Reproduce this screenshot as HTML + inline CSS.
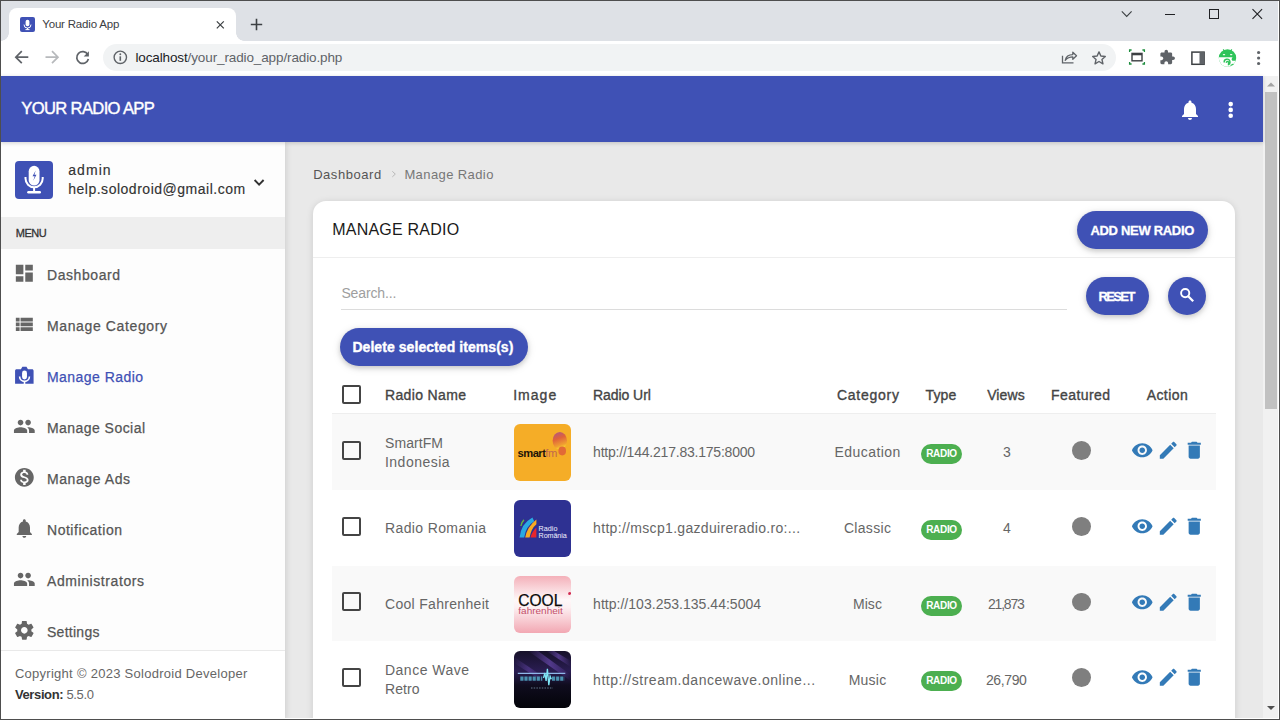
<!DOCTYPE html>
<html><head><meta charset="utf-8"><title>Your Radio App</title>
<style>
*{box-sizing:border-box}
html,body{margin:0;padding:0}
body{width:1280px;height:720px;overflow:hidden;position:relative;background:#e9e9e9;font-family:"Liberation Sans",sans-serif;color:#555}
.a{position:absolute}
.t{position:absolute;white-space:nowrap;line-height:1;z-index:3}
svg{position:absolute;display:block;z-index:3}
#tabstrip{left:0;top:0;width:1280px;height:41px;background:#dee1e6}
#tab{left:9px;top:8px;width:227px;height:33px;background:#fff;border-radius:8px 8px 0 0}
#tabcl{left:1px;top:33px;width:8px;height:8px;background:radial-gradient(circle at 0 0,#dee1e6 7.5px,#fff 8px)}
#tabcr{left:236px;top:33px;width:8px;height:8px;background:radial-gradient(circle at 100% 0,#dee1e6 7.5px,#fff 8px)}
#favicon{left:20px;top:17px;width:15px;height:15px;background:#3f51b5;border-radius:2px}
#toolbar{left:0;top:41px;width:1280px;height:35px;background:#fff}
#omni{left:103px;top:44px;width:1013px;height:27px;background:#f1f3f4;border-radius:14px}
#header{left:0;top:76px;width:1263px;height:66px;background:#3f51b5;z-index:2;box-shadow:0 1px 4px rgba(0,0,0,.18)}
#sidebar{left:0;top:142px;width:285px;height:578px;background:#fdfdfd;box-shadow:1px 0 6px rgba(0,0,0,.12)}
#avatar{left:15px;top:161px;width:38px;height:38px;background:#3f51b5;border-radius:4px}
#menuband{left:0;top:217px;width:285px;height:32px;background:#eeeeee}
#sfooter{left:0;top:650px;width:285px;height:70px;background:#fff;border-top:1px solid #e9e9e9}
#card{left:313px;top:201px;width:922px;height:600px;background:#fff;border-radius:13px;box-shadow:0 1px 7px rgba(0,0,0,.13)}
#cardhdr{left:313px;top:257px;width:922px;height:1px;background:#eeeeee}
#searchline{left:341px;top:309px;width:726px;height:1px;background:#dcdcdc}
.btn{position:absolute;background:#3f51b5;border-radius:19px;box-shadow:0 2px 5px rgba(0,0,0,.16),0 2px 10px rgba(0,0,0,.10)}
#addbtn{left:1077px;top:211px;width:131px;height:38px}
#resetbtn{left:1086px;top:277px;width:63px;height:38px}
#searchbtn{left:1168px;top:277px;width:38px;height:38px}
#delbtn{left:340px;top:328px;width:188px;height:38px}
#thline{left:332px;top:413px;width:884px;height:1px;background:#eeeeee}
.row{position:absolute;left:332px;width:884px;background:#f9f9f9}
.cb{position:absolute;left:342px;width:19px;height:19px;border:2px solid #444;border-radius:2px}
.thumb{position:absolute;left:514px;width:57px;height:57px;border-radius:6px;overflow:hidden}
.badge{position:absolute;left:921px;width:41px;height:20px;border-radius:10px;background:#4caf50;color:#fff;font-weight:700;font-size:10px;line-height:20px;text-align:center;letter-spacing:-0.3px}
.dot{position:absolute;left:1071.8px;width:18.8px;height:18.8px;border-radius:50%;background:#7f7f7f}
#scroll{left:1263px;top:76px;width:16px;height:644px;background:#f1f1f1}
#thumbbar{left:1265px;top:92px;width:12px;height:317px;background:#c1c1c1}
#border{left:0;top:0;width:1280px;height:720px;border:1px solid #4e4e4e;box-shadow:inset -1px -1px 0 #fff;pointer-events:none;z-index:5}

</style></head><body>
<div id="tabstrip" class="a"></div>
<div id="tab" class="a"></div>
<div id="tabcl" class="a"></div>
<div id="tabcr" class="a"></div>
<div id="favicon" class="a"></div>
<svg style="left:20px;top:17px" width="15" height="15" viewBox="0 0 15 15"><rect x="5.6" y="2.8" width="3.8" height="6.4" rx="1.9" fill="#fff"/><path d="M4 7.6a3.5 3.5 0 0 0 7 0" stroke="#fff" stroke-width="1" fill="none"/><path d="M7.5 11v1.5M5.5 12.6h4" stroke="#fff" stroke-width="1"/></svg>
<svg style="left:214px;top:19px" width="12" height="12" viewBox="0 0 12 12"><path d="M2.8 2.4l7 7M9.8 2.4l-7 7" stroke="#3c4043" stroke-width="1.25"/></svg>
<svg style="left:249px;top:17px" width="15" height="15" viewBox="0 0 15 15"><path d="M7.5 1.8v11.4M1.8 7.5h11.4" stroke="#3c4043" stroke-width="1.6"/></svg>
<!-- window controls -->
<svg style="left:1118px;top:6px" width="16" height="16" viewBox="0 0 16 16"><path d="M3.8 5.4l4.9 5 4.9-5" stroke="#3c4043" stroke-width="1.1" fill="none"/></svg>
<div class="a" style="left:1165px;top:13.5px;width:10px;height:1.2px;background:#202124"></div>
<div class="a" style="left:1209px;top:9px;width:9.6px;height:9.6px;border:1.2px solid #202124"></div>
<svg style="left:1250px;top:7px" width="14" height="14" viewBox="0 0 14 14"><path d="M2.5 2.2l9.6 9.7M12.1 2.2l-9.6 9.7" stroke="#202124" stroke-width="1.1"/></svg>
<div id="toolbar" class="a"></div>
<svg style="left:12px;top:45px" width="20" height="24" viewBox="0 0 20 24"><path d="M16.3 12.2H4.5M9.8 6.2l-6 6 6 6" stroke="#5f6368" stroke-width="1.7" fill="none"/></svg>
<svg style="left:42px;top:45px" width="20" height="24" viewBox="0 0 20 24"><path d="M3.5 12.2h11.8M10 6.2l6 6-6 6" stroke="#b7b9bc" stroke-width="1.7" fill="none"/></svg>
<svg style="left:73px;top:45px" width="20" height="24" viewBox="0 0 20 24"><path d="M14.8 9.6A5.9 5.9 0 1 0 15.4 14" stroke="#5f6368" stroke-width="1.7" fill="none"/><path d="M15.9 6.2v5.2h-5.2z" fill="#5f6368"/></svg>
<div id="omni" class="a"></div>
<svg style="left:112px;top:49px" width="17" height="17" viewBox="0 0 17 17"><circle cx="8.3" cy="8.3" r="6.2" stroke="#5f6368" stroke-width="1.4" fill="none"/><path d="M8.3 7.3v4.5" stroke="#5f6368" stroke-width="1.6"/><circle cx="8.3" cy="5.2" r="0.95" fill="#5f6368"/></svg>
<!-- share -->
<svg style="left:1060px;top:48px" width="18" height="18" viewBox="0 0 18 18"><path d="M2.5 7.8v7h11" stroke="#5f6368" stroke-width="1.3" fill="none"/><path d="M5.2 12.3c.8-3.8 3.3-5.7 7.6-5.7V4.2l3.7 3.5-3.7 3.5V8.9c-3.1 0-5.6 1.1-7.6 3.4z" stroke="#5f6368" stroke-width="1.3" fill="none" stroke-linejoin="round"/></svg>
<!-- star -->
<svg style="left:1090px;top:49px" width="18" height="18" viewBox="0 0 18 18"><path d="M9 2.9l1.85 4.1 4.45.45-3.35 3 1 4.35L9 12.5l-3.95 2.3 1-4.35-3.35-3 4.45-.45z" stroke="#5f6368" stroke-width="1.4" fill="none" stroke-linejoin="round"/></svg>
<!-- screen capture -->
<svg style="left:1128px;top:48px" width="18" height="18" viewBox="0 0 18 18"><rect x="4" y="5.4" width="10" height="7.4" stroke="#3c4043" stroke-width="1.4" fill="none"/><path d="M4 6.6h10" stroke="#3c4043" stroke-width="1.4"/><path d="M1.6 4V2h2M14.4 2h2v2M16.4 14v2h-2M3.6 16h-2v-2" stroke="#1e8e3e" stroke-width="1.3" fill="none"/></svg>
<!-- puzzle -->
<svg style="left:1158.5px;top:49px" width="16.6" height="16.6" viewBox="0 0 24 24"><path d="M20.5 11H19V7c0-1.1-.9-2-2-2h-4V3.5C13 2.12 11.88 1 10.5 1S8 2.12 8 3.5V5H4c-1.1 0-1.99.9-1.99 2v3.8H3.5c1.49 0 2.7 1.210 2.7 2.7s-1.21 2.7-2.7 2.7H2V20c0 1.1.9 2 2 2h3.8v-1.5c0-1.49 1.21-2.7 2.7-2.7 1.49 0 2.7 1.21 2.7 2.7V22H17c1.1 0 2-.9 2-2v-4h1.5c1.38 0 2.5-1.12 2.5-2.5S21.88 11 20.5 11z" fill="#5f6368"/></svg>
<!-- sidebar -->
<svg style="left:1189px;top:48.5px" width="18" height="18" viewBox="0 0 18 18"><rect x="2.9" y="3.1" width="12.2" height="12.2" stroke="#3c4043" stroke-width="1.5" fill="none"/><rect x="10.5" y="3.1" width="4.6" height="12.2" fill="#5f6368"/></svg>
<!-- android avatar -->
<svg style="left:1217px;top:47px" width="21" height="21" viewBox="0 0 21 21"><defs><clipPath id="hc"><circle cx="10.5" cy="11" r="8.7"/></clipPath></defs><circle cx="10.5" cy="11" r="8.7" fill="#2fc45a"/><path d="M6.2 2.4l1.3 2.2M14.8 2.4l-1.3 2.2" stroke="#2fc45a" stroke-width="1.1"/><rect x="5.8" y="6.9" width="2.4" height="1.3" rx=".6" fill="#e8fbe8"/><rect x="13" y="6.9" width="2.4" height="1.3" rx=".6" fill="#e8fbe8"/><g clip-path="url(#hc)"><path d="M1 10.3h14.5l-1 2 .8 1.5H20V21H1z" fill="#fff"/></g><path d="M7.2 15.5a2.9 2.9 0 1 1 3.6 2.4M9.4 15.8a1.2 1.2 0 1 1 1.5 1" stroke="#2fc45a" stroke-width="1.4" fill="none"/><path d="M13.5 18.5l3-1.5" stroke="#2fc45a" stroke-width="1.2"/></svg>
<svg style="left:1250px;top:48px" width="18" height="20" viewBox="0 0 18 20"><circle cx="8.6" cy="4.5" r="1.6" fill="#5f6368"/><circle cx="8.6" cy="10" r="1.6" fill="#5f6368"/><circle cx="8.6" cy="15.5" r="1.6" fill="#5f6368"/></svg>

<div id="header" class="a"></div>
<svg style="left:1177.9px;top:97.5px" width="24" height="24" viewBox="0 0 24 24"><path d="M12 22c1.1 0 2-.9 2-2h-4c0 1.1.89 2 2 2zm6-6v-5c0-3.07-1.64-5.64-4.5-6.32V4c0-.83-.67-1.5-1.5-1.5s-1.5.67-1.5 1.5v.68C7.63 5.36 6 7.92 6 11v5l-2 2v1h16v-1l-2-2z" fill="#fff"/></svg>
<svg style="left:1224px;top:98px" width="14" height="24" viewBox="0 0 14 24"><circle cx="6.7" cy="6.1" r="2.3" fill="#fff"/><circle cx="6.7" cy="11.9" r="2.3" fill="#fff"/><circle cx="6.7" cy="17.7" r="2.3" fill="#fff"/></svg>

<div id="sidebar" class="a"></div>
<div id="avatar" class="a"></div>
<svg style="left:15px;top:161px" width="38" height="38" viewBox="0 0 38 38"><rect x="13.7" y="4.8" width="10.8" height="19.8" rx="5.4" fill="#fff"/><path d="M20.7 9.6L17.5 15.3h2.2l-1.5 4.5 3.3-6h-2.1z" fill="#3f51b5"/><path d="M10.5 16V17.6A8.6 8.6 0 0 0 27.7 17.6V16" stroke="#fff" stroke-width="2" fill="none"/><path d="M19.1 26v4.4" stroke="#fff" stroke-width="2"/><rect x="12.2" y="30" width="13.8" height="2.5" rx="1.2" fill="#fff"/></svg>
<svg style="left:250px;top:174px" width="18" height="18" viewBox="0 0 18 18"><path d="M4.6 6l4.5 4.6L13.6 6" stroke="#333" stroke-width="1.9" fill="none"/></svg>
<div id="menuband" class="a"></div>
<!-- nav icons -->
<svg style="left:13.17px;top:262.2px" width="22.66" height="22.66" viewBox="0 0 24 24"><path d="M3 13h8V3H3v10zm0 8h8v-6H3v6zm10 0h8V11h-8v10zm0-18v6h8V3h-8z" fill="#666"/></svg>
<svg style="left:13.17px;top:313.2px" width="22.66" height="22.66" viewBox="0 0 24 24"><path d="M3 14h4v-4H3v4zm0 5h4v-4H3v4zM3 9h4V5H3v4zm5 5h13v-4H8v4zm0 5h13v-4H8v4zM8 5v4h13V5H8z" fill="#666"/></svg>
<svg style="left:13.17px;top:364.2px" width="22.66" height="22.66" viewBox="0 0 24 24"><path d="M3.8 5.6h4.6L9.6 3.4c.2-.3.4-.4.8-.4h3.4c.4 0 .6.1.8.4l1.2 2.2h4.4c.9 0 1.6.7 1.6 1.6V21H2.2V7.2c0-.9.7-1.6 1.6-1.6z" fill="#3f51b5"/><rect x="9.6" y="7" width="5.2" height="9.3" rx="2.6" fill="#fff"/><path d="M7 13.2a5.2 5.2 0 0 0 10.4 0" stroke="#fff" stroke-width="1.7" fill="none"/><path d="M12.2 18.3V21.5" stroke="#fff" stroke-width="1.7"/></svg>
<svg style="left:13.17px;top:415.2px" width="22.66" height="22.66" viewBox="0 0 24 24"><path d="M16 11c1.66 0 2.99-1.34 2.99-3S17.66 5 16 5c-1.66 0-3 1.34-3 3s1.34 3 3 3zm-8 0c1.66 0 2.99-1.34 2.99-3S9.66 5 8 5C6.34 5 5 6.34 5 8s1.34 3 3 3zm0 2c-2.33 0-7 1.17-7 3.5V19h14v-2.5c0-2.33-4.67-3.5-7-3.5zm8 0c-.29 0-.62.02-.97.05 1.16.84 1.970 1.97 1.97 3.45V19h6v-2.5c0-2.33-4.67-3.5-7-3.5z" fill="#666"/></svg>
<svg style="left:13.17px;top:466.2px" width="22.66" height="22.66" viewBox="0 0 24 24"><path d="M12 2C6.48 2 2 6.48 2 12s4.48 10 10 10 10-4.48 10-10S17.52 2 12 2zm1.41 16.090V20h-2.67v-1.93c-1.71-.36-3.16-1.46-3.27-3.4h1.96c.1 1.05.82 1.87 2.65 1.87 1.96 0 2.4-.98 2.4-1.59 0-.83-.44-1.61-2.67-2.14-2.48-.6-4.18-1.62-4.18-3.67 0-1.72 1.39-2.84 3.11-3.21V4h2.670v1.95c1.86.45 2.79 1.86 2.85 3.39H14.3c-.05-1.11-.64-1.87-2.22-1.87-1.5 0-2.4.68-2.4 1.64 0 .84.65 1.39 2.67 1.910s4.18 1.39 4.18 3.91c-.01 1.83-1.38 2.83-3.12 3.16z" fill="#666"/></svg>
<svg style="left:13.17px;top:517.2px" width="22.66" height="22.66" viewBox="0 0 24 24"><path d="M12 22c1.1 0 2-.9 2-2h-4c0 1.1.89 2 2 2zm6-6v-5c0-3.07-1.64-5.64-4.5-6.32V4c0-.83-.67-1.5-1.5-1.5s-1.5.67-1.5 1.5v.68C7.63 5.36 6 7.92 6 11v5l-2 2v1h16v-1l-2-2z" fill="#666"/></svg>
<svg style="left:13.17px;top:568.2px" width="22.66" height="22.66" viewBox="0 0 24 24"><path d="M16 11c1.66 0 2.99-1.34 2.99-3S17.66 5 16 5c-1.66 0-3 1.34-3 3s1.34 3 3 3zm-8 0c1.66 0 2.99-1.34 2.99-3S9.66 5 8 5C6.34 5 5 6.34 5 8s1.34 3 3 3zm0 2c-2.33 0-7 1.17-7 3.5V19h14v-2.5c0-2.33-4.67-3.5-7-3.5zm8 0c-.29 0-.62.02-.97.05 1.16.84 1.970 1.97 1.97 3.45V19h6v-2.5c0-2.33-4.67-3.5-7-3.5z" fill="#666"/></svg>
<svg style="left:13.17px;top:619.2px" width="22.66" height="22.66" viewBox="0 0 24 24"><path d="M19.43 12.98c.04-.32.07-.64.07-.98s-.03-.66-.07-.98l2.11-1.65c.19-.15.24-.42.12-.64l-2-3.46c-.12-.22-.39-.3-.61-.22l-2.49 1c-.52-.4-1.08-.73-1.69-.98l-.38-2.65C14.46 2.18 14.25 2 14 2h-4c-.25 0-.46.18-.49.42l-.38 2.65c-.61.25-1.17.59-1.690.98l-2.49-1c-.23-.09-.49 0-.61.22l-2 3.46c-.13.22-.07.49.12.64l2.11 1.65c-.04.32-.07.65-.07.98s.03.66.07.98l-2.11 1.65c-.19.15-.24.42-.12.64l2 3.46c.12.22.39.3.61.22l2.49-1c.52.4 1.08.73 1.69.98l.38 2.65c.03.24.24.42.49.42h4c.25 0 .46-.18.49-.42l.38-2.65c.61-.25 1.17-.59 1.69-.98l2.49 1c.23.09.49 0 .61-.22l2-3.46c.12-.22.07-.49-.12-.64l-2.11-1.65zM12 15.5c-1.93 0-3.5-1.57-3.5-3.5s1.57-3.5 3.5-3.5 3.5 1.57 3.5 3.5-1.57 3.5-3.5 3.5z" fill="#666"/></svg>
<div id="sfooter" class="a"></div>

<!-- breadcrumb chevron -->
<svg style="left:389px;top:169px" width="10" height="10" viewBox="0 0 10 10"><path d="M3.3 2.3l3 2.8-3 2.8" stroke="#b5b5b5" stroke-width="0.95" fill="none"/></svg>

<div id="card" class="a"></div>
<div id="cardhdr" class="a"></div>
<div id="addbtn" class="btn"></div>
<div id="searchline" class="a"></div>
<div id="resetbtn" class="btn"></div>
<div id="searchbtn" class="btn"></div>
<svg style="left:1172px;top:282px" width="30" height="28" viewBox="0 0 30 28"><circle cx="13.2" cy="11.1" r="4.1" stroke="#fff" stroke-width="1.9" fill="none"/><path d="M16.2 14.2l5 5" stroke="#fff" stroke-width="2.3"/></svg>
<div id="delbtn" class="btn"></div>
<div class="cb" style="top:385px"></div>
<div id="thline" class="a"></div>
<div class="row" style="top:414px;height:75.75px"></div>
<div class="cb" style="top:440.80px"></div>
<div class="thumb" style="top:424.00px"><svg width="57" height="57" viewBox="0 0 57 57" style="position:static"><defs><linearGradient id="bl" x1="0" y1="0" x2="0.3" y2="1"><stop offset="0" stop-color="#a9558f"/><stop offset=".45" stop-color="#e0623a"/><stop offset=".85" stop-color="#f0a030"/><stop offset="1" stop-color="#f7d030"/></linearGradient></defs><rect width="57" height="57" fill="#f5ad27"/><ellipse cx="45.8" cy="16.8" rx="7.2" ry="8.8" fill="url(#bl)"/><ellipse cx="48.2" cy="27" rx="3.8" ry="4.4" fill="#e26a36"/><text x="3.6" y="32.6" font-family="Liberation Sans" font-weight="700" font-size="11.2" fill="#1e1408" letter-spacing="-0.55">smart<tspan fill="#c0684e" font-weight="400">fm</tspan></text></svg></div>
<div class="badge" style="top:444.00px">RADIO</div>
<div class="dot" style="top:441.00px"></div>
<svg style="left:1130.8px;top:439.00px" width="22.5" height="22.5" viewBox="0 0 24 24"><path d="M12 4.5C7 4.5 2.73 7.61 1 12c1.73 4.39 6 7.5 11 7.5s9.27-3.11 11-7.5c-1.73-4.39-6-7.5-11-7.5zM12 17c-2.76 0-5-2.24-5-5s2.24-5 5-5 5 2.24 5 5-2.240 5-5 5zm0-8c-1.66 0-3 1.34-3 3s1.34 3 3 3 3-1.34 3-3-1.34-3-3-3z" fill="#337ab7"/></svg>
<svg style="left:1156.6px;top:439.00px" width="22.5" height="22.5" viewBox="0 0 24 24"><path d="M3 17.25V21h3.75L17.81 9.94l-3.75-3.75L3 17.25zM20.71 7.04c.39-.39.39-1.02 0-1.41l-2.34-2.34c-.39-.39-1.02-.39-1.41 0l-1.83 1.83 3.75 3.75 1.83-1.83z" fill="#337ab7"/></svg>
<svg style="left:1182.7px;top:439.00px" width="22.5" height="22.5" viewBox="0 0 24 24"><path d="M6 19c0 1.1.9 2 2 2h8c1.1 0 2-.9 2-2V7H6v12zM19 4h-3.5l-1-1h-5l-1 1H5v2h14V4z" fill="#337ab7"/></svg>
<div class="cb" style="top:516.55px"></div>
<div class="thumb" style="top:499.75px"><svg width="57" height="57" viewBox="0 0 57 57" style="position:static"><rect width="57" height="57" fill="#2e3192"/><path d="M5.6 37.6 Q6.8 24 18.4 17.6 L20.2 21.2 Q11.6 26.4 10.2 37.6z" fill="#2aa9e2"/><path d="M11.2 37.6 Q13 26.8 22.4 19.4 L22.4 24.2 Q17 28.6 15.6 37.6z" fill="#f8ab22"/><path d="M16.4 37.6 Q18 31.5 22.4 27.4 L22.4 37.6z" fill="#e8262d"/><path d="M6.2 26 Q6.8 21.6 9.6 19.2 L10.4 20.6 Q8.2 23 7.6 26z" fill="#62b446"/><text x="24.6" y="31.4" font-family="Liberation Sans" font-size="7.2" fill="#f0f0ff">Radio</text><text x="24.6" y="37.6" font-family="Liberation Sans" font-size="7.2" fill="#f0f0ff" letter-spacing="-0.1">România</text></svg></div>
<div class="badge" style="top:519.75px">RADIO</div>
<div class="dot" style="top:516.75px"></div>
<svg style="left:1130.8px;top:514.75px" width="22.5" height="22.5" viewBox="0 0 24 24"><path d="M12 4.5C7 4.5 2.73 7.61 1 12c1.73 4.39 6 7.5 11 7.5s9.27-3.11 11-7.5c-1.73-4.39-6-7.5-11-7.5zM12 17c-2.76 0-5-2.24-5-5s2.24-5 5-5 5 2.24 5 5-2.240 5-5 5zm0-8c-1.66 0-3 1.34-3 3s1.34 3 3 3 3-1.34 3-3-1.34-3-3-3z" fill="#337ab7"/></svg>
<svg style="left:1156.6px;top:514.75px" width="22.5" height="22.5" viewBox="0 0 24 24"><path d="M3 17.25V21h3.75L17.81 9.94l-3.75-3.75L3 17.25zM20.71 7.04c.39-.39.39-1.02 0-1.41l-2.34-2.34c-.39-.39-1.02-.39-1.41 0l-1.83 1.83 3.75 3.75 1.83-1.83z" fill="#337ab7"/></svg>
<svg style="left:1182.7px;top:514.75px" width="22.5" height="22.5" viewBox="0 0 24 24"><path d="M6 19c0 1.1.9 2 2 2h8c1.1 0 2-.9 2-2V7H6v12zM19 4h-3.5l-1-1h-5l-1 1H5v2h14V4z" fill="#337ab7"/></svg>
<div class="row" style="top:565.5px;height:75.75px"></div>
<div class="cb" style="top:592.30px"></div>
<div class="thumb" style="top:575.50px"><svg width="57" height="57" viewBox="0 0 57 57" style="position:static"><defs><linearGradient id="pk" x1="0" y1="0" x2="0" y2="1"><stop offset="0" stop-color="#f4b0b9"/><stop offset=".42" stop-color="#fef8f9"/><stop offset=".55" stop-color="#fdf0f2"/><stop offset="1" stop-color="#f2a7b2"/></linearGradient></defs><rect width="57" height="57" fill="url(#pk)"/><text x="4.2" y="30.4" font-family="Liberation Sans" font-size="15.6" fill="#0a0a0a" stroke="#0a0a0a" stroke-width="0.25" textLength="44.2" lengthAdjust="spacingAndGlyphs">COOL</text><text x="4.3" y="38.3" font-family="Liberation Sans" font-size="8.6" fill="#c4506a" textLength="44.5" lengthAdjust="spacingAndGlyphs">fahrenheit</text><circle cx="55.6" cy="17.4" r="1.5" fill="#d02a50"/></svg></div>
<div class="badge" style="top:595.50px">RADIO</div>
<div class="dot" style="top:592.50px"></div>
<svg style="left:1130.8px;top:590.50px" width="22.5" height="22.5" viewBox="0 0 24 24"><path d="M12 4.5C7 4.5 2.73 7.61 1 12c1.73 4.39 6 7.5 11 7.5s9.27-3.11 11-7.5c-1.73-4.39-6-7.5-11-7.5zM12 17c-2.76 0-5-2.24-5-5s2.24-5 5-5 5 2.24 5 5-2.240 5-5 5zm0-8c-1.66 0-3 1.34-3 3s1.34 3 3 3 3-1.34 3-3-1.34-3-3-3z" fill="#337ab7"/></svg>
<svg style="left:1156.6px;top:590.50px" width="22.5" height="22.5" viewBox="0 0 24 24"><path d="M3 17.25V21h3.75L17.81 9.94l-3.75-3.75L3 17.25zM20.71 7.04c.39-.39.39-1.02 0-1.41l-2.34-2.34c-.39-.39-1.02-.39-1.41 0l-1.83 1.83 3.75 3.75 1.83-1.83z" fill="#337ab7"/></svg>
<svg style="left:1182.7px;top:590.50px" width="22.5" height="22.5" viewBox="0 0 24 24"><path d="M6 19c0 1.1.9 2 2 2h8c1.1 0 2-.9 2-2V7H6v12zM19 4h-3.5l-1-1h-5l-1 1H5v2h14V4z" fill="#337ab7"/></svg>
<div class="cb" style="top:668.05px"></div>
<div class="thumb" style="top:651.25px"><svg width="57" height="57" viewBox="0 0 57 57" style="position:static"><defs><linearGradient id="dw" x1="0" y1="0" x2="0" y2="1"><stop offset="0" stop-color="#161129"/><stop offset=".35" stop-color="#2a1d52"/><stop offset=".6" stop-color="#0f0c1e"/><stop offset="1" stop-color="#040409"/></linearGradient><linearGradient id="st" x1="0" y1="0" x2="1" y2="0"><stop offset="0" stop-color="#7a55c8" stop-opacity="0"/><stop offset=".5" stop-color="#7a55c8" stop-opacity=".55"/><stop offset="1" stop-color="#7a55c8" stop-opacity="0"/></linearGradient></defs><rect width="57" height="57" fill="url(#dw)"/><path d="M14 0 L57 30 L57 24 L24 0z" fill="url(#st)"/><path d="M32 0 L57 16 L57 10 L40 0z" fill="url(#st)"/><path d="M0 6 L30 26 L22 26 L0 12z" fill="url(#st)" opacity=".7"/><path d="M3.8 22.4h47.5" stroke="#8fb8ea" stroke-width="1.1"/><path d="M6.3 27.6h22 M38 27.6h12.5" stroke="#5fc8e6" stroke-width="4.4" stroke-dasharray="3.2 0.9" opacity=".7"/><path d="M29.5 27l1.4-5 1.2 8 1.3-12.3 1.4 16.5 1.3-9 1.2 3" stroke="#7fe6f7" stroke-width="1.3" fill="none"/><path d="M17 37h22" stroke="#9fc0d8" stroke-width="0.6" stroke-dasharray="1.5 1.2"/></svg></div>
<div class="badge" style="top:671.25px">RADIO</div>
<div class="dot" style="top:668.25px"></div>
<svg style="left:1130.8px;top:666.25px" width="22.5" height="22.5" viewBox="0 0 24 24"><path d="M12 4.5C7 4.5 2.73 7.61 1 12c1.73 4.39 6 7.5 11 7.5s9.27-3.11 11-7.5c-1.73-4.39-6-7.5-11-7.5zM12 17c-2.76 0-5-2.24-5-5s2.24-5 5-5 5 2.24 5 5-2.240 5-5 5zm0-8c-1.66 0-3 1.34-3 3s1.34 3 3 3 3-1.34 3-3-1.34-3-3-3z" fill="#337ab7"/></svg>
<svg style="left:1156.6px;top:666.25px" width="22.5" height="22.5" viewBox="0 0 24 24"><path d="M3 17.25V21h3.75L17.81 9.94l-3.75-3.75L3 17.25zM20.71 7.04c.39-.39.39-1.02 0-1.41l-2.34-2.34c-.39-.39-1.02-.39-1.41 0l-1.83 1.83 3.75 3.75 1.83-1.83z" fill="#337ab7"/></svg>
<svg style="left:1182.7px;top:666.25px" width="22.5" height="22.5" viewBox="0 0 24 24"><path d="M6 19c0 1.1.9 2 2 2h8c1.1 0 2-.9 2-2V7H6v12zM19 4h-3.5l-1-1h-5l-1 1H5v2h14V4z" fill="#337ab7"/></svg>
<div id="scroll" class="a"></div>
<div id="thumbbar" class="a"></div>
<svg style="left:1263px;top:76px" width="16" height="16" viewBox="0 0 16 16"><path d="M4 10.5h8L8 6.5z" fill="#a3a3a3"/></svg>
<svg style="left:1263px;top:700px" width="16" height="16" viewBox="0 0 16 16"><path d="M4 6h8l-4 4z" fill="#505050"/></svg>

<div class="t" style="left:42.30px;top:19.37px;font-size:11.5px;font-weight:400;color:#3c4043;letter-spacing:-0.194px;">Your Radio App</div>
<div class="t" style="left:135.40px;top:51.27px;font-size:13.5px;font-weight:400;color:#5f6368;letter-spacing:-0.119px;"><span style="color:#202124">localhost</span>/your_radio_app/radio.php</div>
<div class="t" style="left:21.30px;top:100.55px;font-size:16.6px;font-weight:400;color:#fff;letter-spacing:-0.655px;-webkit-text-stroke:0.4px #fff">YOUR RADIO APP</div>
<div class="t" style="left:68.15px;top:162.95px;font-size:14px;font-weight:400;color:#333;letter-spacing:1.090px;-webkit-text-stroke:0.15px">admin</div>
<div class="t" style="left:68.20px;top:181.90px;font-size:14px;font-weight:400;color:#333;letter-spacing:0.514px;-webkit-text-stroke:0.15px">help.solodroid@gmail.com</div>
<div class="t" style="left:15.80px;top:228.49px;font-size:11px;font-weight:400;color:#333;letter-spacing:-0.530px;-webkit-text-stroke:0.3px">MENU</div>
<div class="t" style="left:47.00px;top:267.55px;font-size:14px;font-weight:400;color:#555;letter-spacing:0.562px;-webkit-text-stroke:0.25px">Dashboard</div>
<div class="t" style="left:47.00px;top:318.55px;font-size:14px;font-weight:400;color:#555;letter-spacing:0.622px;-webkit-text-stroke:0.25px">Manage Category</div>
<div class="t" style="left:47.00px;top:369.55px;font-size:14px;font-weight:400;color:#3f51b5;letter-spacing:0.449px;-webkit-text-stroke:0.25px">Manage Radio</div>
<div class="t" style="left:47.00px;top:420.55px;font-size:14px;font-weight:400;color:#555;letter-spacing:0.448px;-webkit-text-stroke:0.25px">Manage Social</div>
<div class="t" style="left:47.00px;top:471.55px;font-size:14px;font-weight:400;color:#555;letter-spacing:0.573px;-webkit-text-stroke:0.25px">Manage Ads</div>
<div class="t" style="left:47.00px;top:522.55px;font-size:14px;font-weight:400;color:#555;letter-spacing:0.521px;-webkit-text-stroke:0.25px">Notification</div>
<div class="t" style="left:47.00px;top:573.55px;font-size:14px;font-weight:400;color:#555;letter-spacing:0.579px;-webkit-text-stroke:0.25px">Administrators</div>
<div class="t" style="left:47.00px;top:624.55px;font-size:14px;font-weight:400;color:#555;letter-spacing:0.272px;-webkit-text-stroke:0.25px">Settings</div>
<div class="t" style="left:14.90px;top:666.50px;font-size:13px;font-weight:400;color:#666;letter-spacing:0.275px;">Copyright © 2023 Solodroid Developer</div>
<div class="t" style="left:14.90px;top:688.00px;font-size:13px;font-weight:400;color:#666;letter-spacing:-0.371px;"><b style="color:#333">Version:</b> 5.5.0</div>
<div class="t" style="left:313.15px;top:168.20px;font-size:13px;font-weight:400;color:#555;letter-spacing:0.549px;">Dashboard</div>
<div class="t" style="left:404.40px;top:168.20px;font-size:13px;font-weight:400;color:#777;letter-spacing:0.403px;">Manage Radio</div>
<div class="t" style="left:332.20px;top:221.96px;font-size:16px;font-weight:400;color:#1a1a1a;letter-spacing:0.230px;">MANAGE RADIO</div>
<div class="t" style="left:1090.40px;top:223.70px;font-size:13px;font-weight:700;color:#fff;letter-spacing:-0.301px;-webkit-text-stroke:0.3px #fff">ADD NEW RADIO</div>
<div class="t" style="left:341.40px;top:286.15px;font-size:14px;font-weight:400;color:#9e9e9e;letter-spacing:-0.129px;">Search...</div>
<div class="t" style="left:1098.40px;top:290.00px;font-size:13px;font-weight:700;color:#fff;letter-spacing:-1.586px;-webkit-text-stroke:0.3px #fff">RESET</div>
<div class="t" style="left:352.40px;top:339.85px;font-size:14px;font-weight:700;color:#fff;letter-spacing:0.064px;-webkit-text-stroke:0.35px #fff">Delete selected items(s)</div>
<div class="t" style="left:385.00px;top:387.95px;font-size:14px;font-weight:400;color:#444;letter-spacing:0.352px;-webkit-text-stroke:0.35px">Radio Name</div>
<div class="t" style="left:513.20px;top:387.95px;font-size:14px;font-weight:400;color:#444;letter-spacing:1.020px;-webkit-text-stroke:0.35px">Image</div>
<div class="t" style="left:592.90px;top:387.95px;font-size:14px;font-weight:400;color:#444;letter-spacing:-0.045px;-webkit-text-stroke:0.35px">Radio Url</div>
<div class="t" style="left:836.90px;top:387.95px;font-size:14px;font-weight:400;color:#444;letter-spacing:0.741px;-webkit-text-stroke:0.35px">Category</div>
<div class="t" style="left:925.40px;top:387.95px;font-size:14px;font-weight:400;color:#444;letter-spacing:0.214px;-webkit-text-stroke:0.35px">Type</div>
<div class="t" style="left:987.20px;top:387.95px;font-size:14px;font-weight:400;color:#444;letter-spacing:0.102px;-webkit-text-stroke:0.35px">Views</div>
<div class="t" style="left:1051.00px;top:387.95px;font-size:14px;font-weight:400;color:#444;letter-spacing:0.422px;-webkit-text-stroke:0.35px">Featured</div>
<div class="t" style="left:1146.70px;top:387.95px;font-size:14px;font-weight:400;color:#444;letter-spacing:0.416px;-webkit-text-stroke:0.35px">Action</div>
<div class="t" style="left:385.00px;top:435.55px;font-size:14px;font-weight:400;color:#666;letter-spacing:0.073px;">SmartFM</div>
<div class="t" style="left:385.00px;top:454.55px;font-size:14px;font-weight:400;color:#666;letter-spacing:0.473px;">Indonesia</div>
<div class="t" style="left:593.10px;top:445.15px;font-size:14px;font-weight:400;color:#666;letter-spacing:-0.215px;">http://144.217.83.175:8000</div>
<div class="t" style="left:834.40px;top:445.15px;font-size:14px;font-weight:400;color:#666;letter-spacing:0.465px;">Education</div>
<div class="t" style="left:1002.90px;top:445.15px;font-size:14px;font-weight:400;color:#666;letter-spacing:0.000px;">3</div>
<div class="t" style="left:385.00px;top:521.05px;font-size:14px;font-weight:400;color:#666;letter-spacing:0.375px;">Radio Romania</div>
<div class="t" style="left:593.10px;top:521.05px;font-size:14px;font-weight:400;color:#666;letter-spacing:0.316px;">http://mscp1.gazduireradio.ro:...</div>
<div class="t" style="left:843.90px;top:521.05px;font-size:14px;font-weight:400;color:#666;letter-spacing:0.312px;">Classic</div>
<div class="t" style="left:1002.90px;top:521.05px;font-size:14px;font-weight:400;color:#666;letter-spacing:0.000px;">4</div>
<div class="t" style="left:385.00px;top:596.85px;font-size:14px;font-weight:400;color:#666;letter-spacing:0.312px;">Cool Fahrenheit</div>
<div class="t" style="left:593.10px;top:596.85px;font-size:14px;font-weight:400;color:#666;letter-spacing:0.025px;">http://103.253.135.44:5004</div>
<div class="t" style="left:852.90px;top:596.85px;font-size:14px;font-weight:400;color:#666;letter-spacing:0.073px;">Misc</div>
<div class="t" style="left:987.90px;top:596.85px;font-size:14px;font-weight:400;color:#666;letter-spacing:-1.166px;">21,873</div>
<div class="t" style="left:385.00px;top:662.95px;font-size:14px;font-weight:400;color:#666;letter-spacing:0.486px;">Dance Wave</div>
<div class="t" style="left:385.00px;top:681.95px;font-size:14px;font-weight:400;color:#666;letter-spacing:0.066px;">Retro</div>
<div class="t" style="left:593.10px;top:672.55px;font-size:14px;font-weight:400;color:#666;letter-spacing:0.517px;">http://stream.dancewave.online...</div>
<div class="t" style="left:848.65px;top:672.55px;font-size:14px;font-weight:400;color:#666;letter-spacing:0.234px;">Music</div>
<div class="t" style="left:985.90px;top:672.55px;font-size:14px;font-weight:400;color:#666;letter-spacing:-0.366px;">26,790</div>
<div id="border" class="a"></div>
</body></html>
